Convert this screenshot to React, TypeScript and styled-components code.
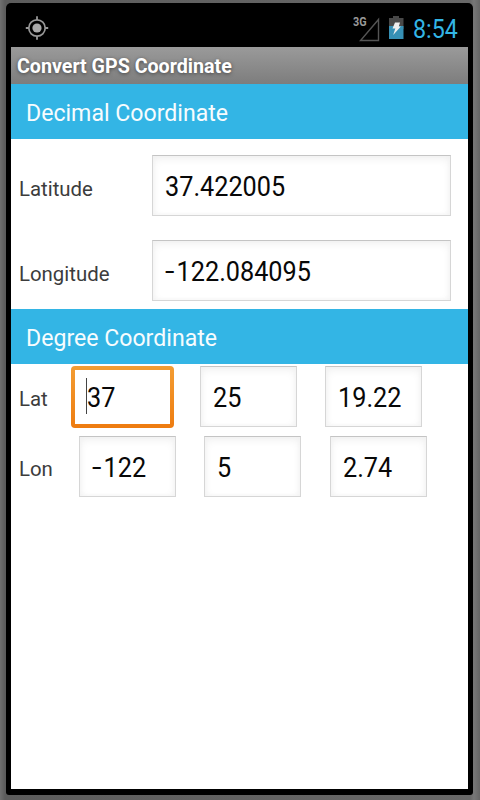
import React from "react";
import styled, { createGlobalStyle, css } from "styled-components";

const GlobalStyle = createGlobalStyle`
  * { box-sizing: border-box; }
  body { margin: 0; background: #686868; font-family: Roboto, sans-serif; }
`;

const Stage = styled.div`
  width: 480px;
  height: 800px;
  padding: 3px 7px 5px 6px;
  background: linear-gradient(90deg, #707070 0, #5c5c5c 5px, #686868 470px, #777 474px, #666 480px);
  overflow: hidden;
`;

const Bezel = styled.div`
  display: flex;
  flex-direction: column;
  height: 792px;
  padding: 0 5px 6px 5px;
  background: #000;
  border-radius: 5px 5px 3px 3px;
`;

const StatusBar = styled.header`
  display: flex;
  align-items: flex-start;
  height: 44px;
  padding: 11px 9px 0 14px;
`;

const StatusIcons = styled.div`
  display: flex;
  align-items: flex-start;
  margin-left: auto;
`;

const Screen = styled.main`
  flex: 1;
  background: #fff;
`;

const TitleBar = styled.div`
  height: 37px;
  padding-left: 6px;
  background: linear-gradient(#9a9a9a, #7d7d7d);
`;

const SectionBar = styled.div`
  height: 55px;
  padding-left: 15px;
  background: #33b5e5;
`;

const Label = styled.span<{ $size: number; $line: number; $color: string; $stretch?: number; $bold?: boolean }>`
  display: inline-block;
  font-size: ${(p) => p.$size}px;
  line-height: ${(p) => p.$line}px;
  font-weight: ${(p) => (p.$bold ? 700 : 400)};
  color: ${(p) => p.$color};
  white-space: pre;
  transform: scaleX(${(p) => p.$stretch ?? 1});
  transform-origin: 0 50%;
  ${(p) => p.$bold && css`text-shadow: 0 1px 4px #444;`}
`;

const DecimalForm = styled.div`
  display: flex;
  flex-direction: column;
  gap: 24px;
  padding: 16px 17px 8px 8px;
`;

const DecimalRow = styled.div`
  display: grid;
  grid-template-columns: 133px 299px;
  height: 61px;
`;

const DegreeForm = styled.div`
  display: flex;
  flex-direction: column;
  gap: 9px;
  padding: 2px 0 0 8px;
`;

const DegreeRow = styled.div<{ $columns: string }>`
  display: grid;
  grid-template-columns: ${(p) => p.$columns};
  justify-items: end;
  height: 61px;

  & > :first-child {
    justify-self: start;
  }
`;

const Field = styled.div<{ $focused?: boolean }>`
  display: flex;
  width: 97px;
  height: 61px;
  padding-left: 12px;
  border: 1px solid #d6d6d6;
  border-top-color: #c4c4c4;
  background: #fff;
  box-shadow: inset 0 3px 8px #f0f0f0, inset 0 0 5px #f5f5f5;
  ${(p) =>
    p.$focused &&
    css`
      width: 103px;
      height: 62px;
      padding-left: 11px;
      border: 4px solid transparent;
      border-radius: 4px;
      background:
        linear-gradient(#fff, #fff) padding-box,
        linear-gradient(#f39d33, #ee7c10) border-box;
      box-shadow: none;
    `}
`;

const WideField = styled(Field)`
  width: 299px;
`;

const Caret = styled.i`
  width: 1px;
  height: 36px;
  margin-top: 8px;
  background: #444;
`;

const Minus = styled.span`
  display: inline-block;
  width: 12.4px;
  transform: translateY(-1px) scaleX(1.35);
  transform-origin: 0 50%;
`;

const LocationIcon = () => (
  <svg width="24" height="28" viewBox="0 0 24 28" fill="none" stroke="#979797">
    <circle cx="12" cy="14" r="8.2" strokeWidth="1.7" />
    <circle cx="12" cy="14" r="4.6" fill="#a9a9a9" stroke="none" />
    <path d="M12 2.3V6M12 22v3.7M.8 14H4M20 14h3.2" strokeWidth="1.8" />
  </svg>
);

const Network = styled.div`
  display: flex;
  width: 35px;
`;

const NetworkName = styled.span`
  width: 6px;
  margin-top: 1px;
  font-size: 13px;
  line-height: 14px;
  font-weight: 700;
  color: #999;
  transform: scaleX(0.83);
  transform-origin: 0 50%;
`;

const SignalIcon = () => (
  <svg width="22" height="28" viewBox="0 0 22 28" fill="none" stroke="#555">
    <path d="M19.5 6.5v21H1.5z" strokeWidth="1.4" transform="translate(0 -1)" />
  </svg>
);

const BatteryIcon = () => (
  <svg width="16" height="28" viewBox="0 0 16 28">
    <path d="M5 2h6v2h4.5v11H1V4h4z" fill="#484848" />
    <path d="M1 15h14.5v11H1z" transform="translate(0 -1)" fill="#3690b5" />
    <path d="M1 12h14.5v2H1z" fill="#3690b5" />
    <path d="M7 9h5l-1.2 4h2L5.2 21.5 7.3 15H4.5z" transform="translate(0 -.5)" fill="#eee" />
  </svg>
);

const ClockSlot = styled.div`
  width: 46px;
  margin-left: 9px;
`;

const Value = ({ text, line = 62 }: { text: string; line?: number }) => (
  <Label $size={27} $line={line} $color="#080808" $stretch={0.935}>
    {text.startsWith("-") ? (
      <>
        <Minus>-</Minus>
        {text.slice(1)}
      </>
    ) : (
      text
    )}
  </Label>
);

const Caption = ({ text, line = 67 }: { text: string; line?: number }) => (
  <Label $size={20.8} $line={line} $color="#3c3c3c" $stretch={0.98}>{text}</Label>
);

const SectionTitle = ({ text }: { text: string }) => (
  <Label $size={24.5} $line={58} $color="#f7fcfe" $stretch={0.943}>{text}</Label>
);

export default function App() {
  return (
    <>
      <GlobalStyle />
      <Stage>
        <Bezel>
          <StatusBar>
            <LocationIcon />
            <StatusIcons>
              <Network>
                <NetworkName>3G</NetworkName>
                <SignalIcon />
              </Network>
              <BatteryIcon />
              <ClockSlot>
                <Label $size={25} $line={32} $color="#33b5e5" $stretch={0.93}>8:54</Label>
              </ClockSlot>
            </StatusIcons>
          </StatusBar>
          <Screen>
            <TitleBar>
              <Label $size={20.8} $line={38} $color="#fff" $stretch={0.945} $bold>Convert GPS Coordinate</Label>
            </TitleBar>
            <SectionBar>
              <SectionTitle text="Decimal Coordinate" />
            </SectionBar>
            <DecimalForm>
              <DecimalRow>
                <Caption text="Latitude" line={69} />
                <WideField><Value text="37.422005" /></WideField>
              </DecimalRow>
              <DecimalRow>
                <Caption text="Longitude" line={69} />
                <WideField><Value text="-122.084095" /></WideField>
              </DecimalRow>
            </DecimalForm>
            <SectionBar>
              <SectionTitle text="Degree Coordinate" />
            </SectionBar>
            <DegreeForm>
              <DegreeRow $columns="52px 103px 123px 125px">
                <Caption text="Lat" />
                <Field $focused><Caret /><Value text="37" line={56} /></Field>
                <Field><Value text="25" /></Field>
                <Field><Value text="19.22" /></Field>
              </DegreeRow>
              <DegreeRow $columns="60px 97px 125px 126px">
                <Caption text="Lon" />
                <Field><Value text="-122" /></Field>
                <Field><Value text="5" /></Field>
                <Field><Value text="2.74" /></Field>
              </DegreeRow>
            </DegreeForm>
          </Screen>
        </Bezel>
      </Stage>
    </>
  );
}
